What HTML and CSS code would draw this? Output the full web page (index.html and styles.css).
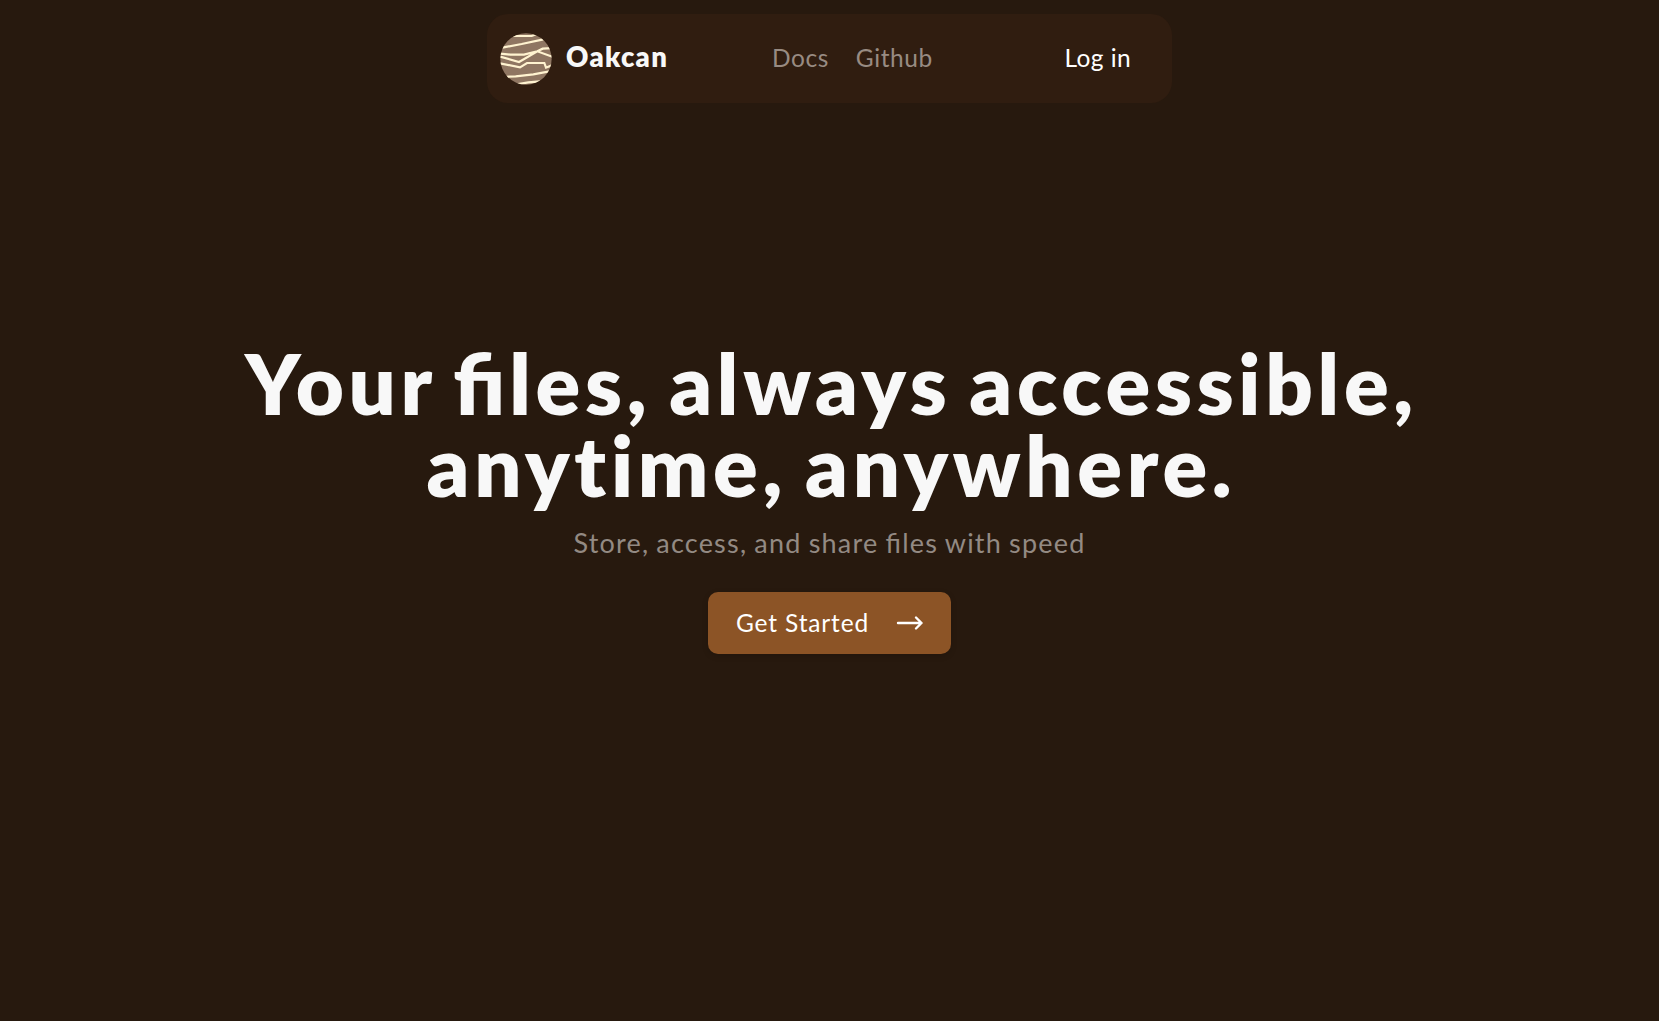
FILE: index.html
```html
<!DOCTYPE html>
<html lang="en">
<head>
<meta charset="utf-8">
<title>Oakcan</title>
<link rel="stylesheet" href="styles.css">
</head>
<body>
<header class="nav">
  <a class="brand">
    <svg class="logo" viewBox="15 13 156 156" fill="none">
      <defs><clipPath id="disc"><circle cx="93" cy="91" r="77"/></clipPath></defs>
      <circle cx="93" cy="91" r="77" fill="#8f7662"/>
      <g clip-path="url(#disc)" stroke="#fff3d0" stroke-width="6.5">
        <path d="M45 22H110L125 16M22 57L80 46L145 32M15 75L46 78H87L127 68L143 60L175 58M15 84L72 100L127 68L175 85M15 104L75 116L96 103H148L153 117L175 108M15 145L62 143L115 137L175 126M65 167L100 161L135 158"/>
      </g>
    </svg>
    <span class="brand-name">Oakcan</span>
  </a>
  <nav class="links"><a class="docs">Docs</a><a class="github">Github</a></nav>
  <a class="login">Log in</a>
</header>
<main class="hero">
  <h1 class="title">Your <span class="ligature">fi</span>les, always accessible,<br>anytime, anywhere.</h1>
  <p class="subtitle">Store, access, and share <span class="ligature">fi</span>les with speed</p>
  <a class="cta"><span class="cta-label">Get Started</span>
    <svg class="arrow" viewBox="0 0 28 16" fill="none" stroke="#fff" stroke-width="2.4" stroke-linecap="round" stroke-linejoin="round"><path d="M2 8H25.5M20 2.5L25.5 8L20 13.5"/></svg>
  </a>
</main>
</body>
</html>
```
FILE: styles.css
```css
* { box-sizing: border-box; }
body {
  margin: 0;
  min-height: 1021px;
  padding-top: 14px;
  background: #27190e;
  color: #f8f8f8;
  font-family: Lato, sans-serif;
}
.nav {
  display: flex;
  align-items: center;
  width: 685px;
  height: 89px;
  margin: 0 auto;
  padding: 0 41px 0 13px;
  border-radius: 21px;
  background: #301d10;
  font-size: 24.5px;
  letter-spacing: .55px;
}
.brand { display: flex; align-items: center; width: 272px; gap: 14px; }
.logo { width: 52px; height: 52px; }
.brand-name {
  padding-bottom: 4px;
  font-size: 27.5px;
  font-weight: 800;
  letter-spacing: 1.3px;
}
.links, .login { padding-bottom: 3px; }
.links { display: flex; flex: 1; gap: 27px; color: #988b82; }
.login { color: #fff; letter-spacing: .4px; }
.hero {
  display: flex;
  flex-direction: column;
  align-items: center;
  padding-top: 239px;
}
.title {
  margin: 0 -4px 0 0;
  font-size: 83px;
  line-height: 82px;
  font-weight: 800;
  letter-spacing: 4.7px;
  word-spacing: -6px;
  text-align: center;
  white-space: nowrap;
}
.ligature { margin-right: .05em; letter-spacing: 0; }
.subtitle {
  margin: 17px 0 0;
  font-size: 27px;
  line-height: 40px;
  letter-spacing: 1.2px;
  word-spacing: -1px;
  color: #938a83;
}
.cta {
  display: flex;
  align-items: center;
  justify-content: space-between;
  width: 243px;
  height: 62px;
  margin-top: 29px;
  padding: 0 27px 0 28px;
  border-radius: 10px;
  background: #8c5426;
  box-shadow: 0 2px 6px rgba(0, 0, 0, .15);
  color: #fff;
  font-size: 24.5px;
  letter-spacing: .85px;
}
.cta-label { padding-bottom: 2px; }
.arrow { width: 28px; height: 16px; }
```
